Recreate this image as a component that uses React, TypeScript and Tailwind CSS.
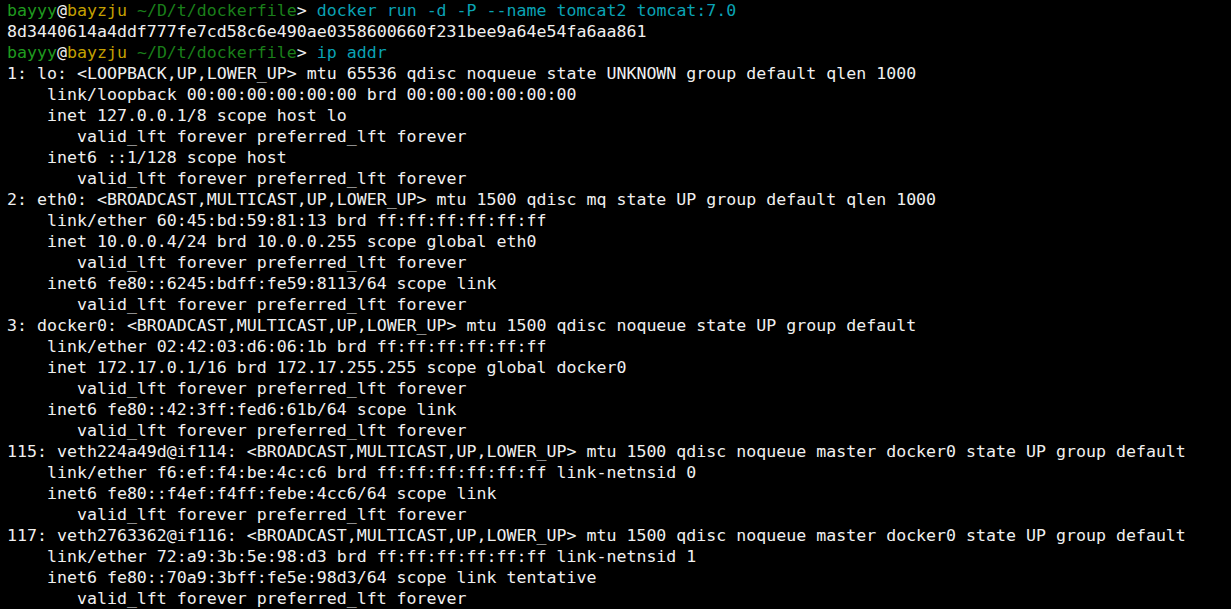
import React from 'react';

const lines: string[] = [
  '1: lo: <LOOPBACK,UP,LOWER_UP> mtu 65536 qdisc noqueue state UNKNOWN group default qlen 1000',
  '    link/loopback 00:00:00:00:00:00 brd 00:00:00:00:00:00',
  '    inet 127.0.0.1/8 scope host lo',
  '       valid_lft forever preferred_lft forever',
  '    inet6 ::1/128 scope host',
  '       valid_lft forever preferred_lft forever',
  '2: eth0: <BROADCAST,MULTICAST,UP,LOWER_UP> mtu 1500 qdisc mq state UP group default qlen 1000',
  '    link/ether 60:45:bd:59:81:13 brd ff:ff:ff:ff:ff:ff',
  '    inet 10.0.0.4/24 brd 10.0.0.255 scope global eth0',
  '       valid_lft forever preferred_lft forever',
  '    inet6 fe80::6245:bdff:fe59:8113/64 scope link',
  '       valid_lft forever preferred_lft forever',
  '3: docker0: <BROADCAST,MULTICAST,UP,LOWER_UP> mtu 1500 qdisc noqueue state UP group default',
  '    link/ether 02:42:03:d6:06:1b brd ff:ff:ff:ff:ff:ff',
  '    inet 172.17.0.1/16 brd 172.17.255.255 scope global docker0',
  '       valid_lft forever preferred_lft forever',
  '    inet6 fe80::42:3ff:fed6:61b/64 scope link',
  '       valid_lft forever preferred_lft forever',
  '115: veth224a49d@if114: <BROADCAST,MULTICAST,UP,LOWER_UP> mtu 1500 qdisc noqueue master docker0 state UP group default',
  '    link/ether f6:ef:f4:be:4c:c6 brd ff:ff:ff:ff:ff:ff link-netnsid 0',
  '    inet6 fe80::f4ef:f4ff:febe:4cc6/64 scope link',
  '       valid_lft forever preferred_lft forever',
  '117: veth2763362@if116: <BROADCAST,MULTICAST,UP,LOWER_UP> mtu 1500 qdisc noqueue master docker0 state UP group default',
  '    link/ether 72:a9:3b:5e:98:d3 brd ff:ff:ff:ff:ff:ff link-netnsid 1',
  '    inet6 fe80::70a9:3bff:fe5e:98d3/64 scope link tentative',
  '       valid_lft forever preferred_lft forever',
];

const Prompt = ({ cmd }: { cmd: string }): JSX.Element => (
  <div>
    <span className="text-[#1f9a1f]">bayyy</span>
    <span>@</span>
    <span className="text-[#c4a000]">bayzju</span>
    <span className="text-[#1a7f1a]"> ~/D/t/dockerfile</span>
    <span>&gt; </span>
    <span className="text-[#0aa2b4]">{cmd}</span>
  </div>
);

export default function App(): JSX.Element {
  return (
    <div className="w-[1231px] h-[609px] overflow-hidden bg-black pl-[7px] text-[#f0f0f0] font-['DejaVu_Sans_Mono',monospace] text-[16.6px] leading-[21px] whitespace-pre">
      <Prompt cmd="docker run -d -P --name tomcat2 tomcat:7.0" />
      <div>8d3440614a4ddf777fe7cd58c6e490ae0358600660f231bee9a64e54fa6aa861</div>
      <Prompt cmd="ip addr" />
      {lines.map((l, i) => (
        <div key={i}>{l}</div>
      ))}
    </div>
  );
}
